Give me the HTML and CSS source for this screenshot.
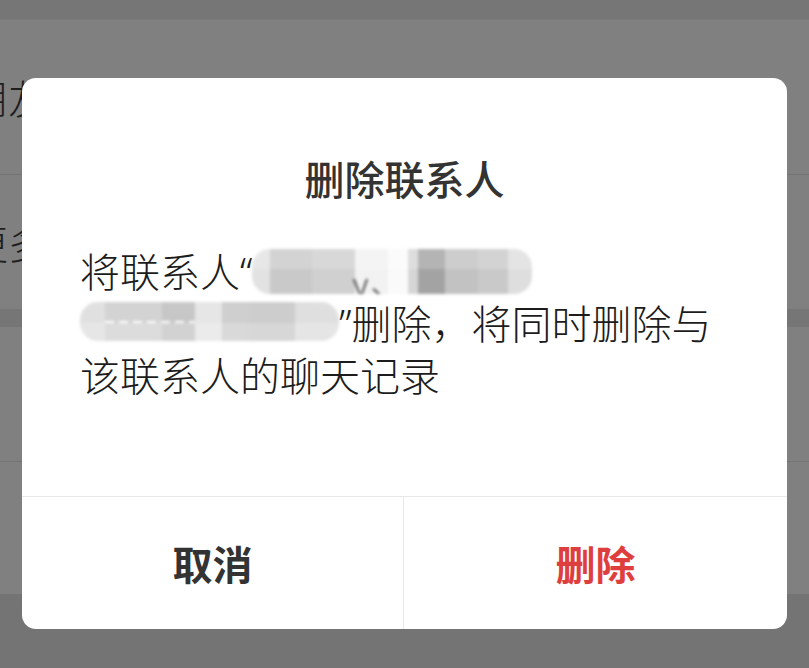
FILE: index.html
```html
<!DOCTYPE html>
<html lang="zh-CN">
<head>
<meta charset="utf-8">
<title>删除联系人</title>
<link rel="stylesheet" href="styles.css">
</head>
<body>
<div class="screen">
  <div class="topbar"></div>
  <div class="row r1"><span class="bgtext">朋友</span></div>
  <div class="row r2"><span class="bgtext">更多</span></div>
  <div class="gap"></div>
  <div class="row r3"></div>
  <div class="row r4"></div>
  <div class="bottom"></div>

  <div class="dialog">
    <div class="content">
      <h2 class="title">删除联系人</h2>
      <p class="msg">将联系人<span class="q">“</span><span class="mosaic m1"><span class="frag">y、</span></span><br><span class="mosaic m2"></span><span class="q">”</span>删除，将同时删除与该联系人的聊天记录</p>
    </div>
    <div class="actions">
      <button class="btn cancel">取消</button>
      <button class="btn danger">删除</button>
    </div>
  </div>
</div>
</body>
</html>
```

FILE: styles.css
```css
html, body {
  margin: 0;
  padding: 0;
}
body {
  width: 809px;
  height: 668px;
  overflow: hidden;
  font-family: "Noto Sans CJK SC", "Noto Sans", sans-serif;
  background: #7f7f7f;
}
.screen {
  position: relative;
  width: 809px;
  height: 668px;
  display: flex;
  flex-direction: column;
  background: #808080;
}
.topbar {
  height: 20px;
  background: #767676;
  border-bottom: 1px solid #7b7b7b;
  box-sizing: border-box;
}
.row {
  display: flex;
  align-items: center;
  box-sizing: border-box;
  background: #808080;
}
.r1 { height: 155px; border-bottom: 1px solid #747474; }
.r2 { height: 134px; }
.gap { height: 18px; background: #767676; }
.r3 { height: 135px; border-bottom: 1px solid #747474; }
.r4 { height: 132px; }
.bottom { flex: 1; background: #747474; }

.bgtext {
  margin-left: -32px;
  font-size: 40px;
  font-weight: 300;
  color: #1e1e1e;
  line-height: 1;
}

.dialog {
  position: absolute;
  left: 22px;
  top: 78px;
  width: 765px;
  height: 551px;
  background: #fff;
  border-radius: 14px;
  display: flex;
  flex-direction: column;
  overflow: hidden;
}
.content {
  flex: 1;
  padding: 72px 58px 0 58px;
}
.title {
  margin: 0;
  font-size: 40px;
  line-height: 56px;
  font-weight: 500;
  color: #333;
  text-align: center;
}
.msg {
  margin: 39px 0 0;
  font-size: 40px;
  line-height: 50px;
  font-weight: 300;
  color: #1c1c1c;
}
.q {
  font-family: "Noto Sans", sans-serif;
  font-weight: 300;
}
.mosaic {
  display: inline-block;
  border-radius: 18px;
  filter: blur(1.5px);
  position: relative;
  overflow: hidden;
}
.m1 {
  width: 280px;
  height: 45px;
  vertical-align: -7px;
  background:
    linear-gradient(180deg, rgba(255,255,255,0.18) 0 45%, rgba(255,255,255,0) 45%),
    linear-gradient(90deg,
      #e2e2e2 0 18px,
      #c9c9c9 18px 60px,
      #d0d0d0 60px 103px,
      #f2f2f2 103px 136px,
      #fafafa 136px 156px,
      #d6d6d6 156px 166px,
      #a3a3a3 166px 193px,
      #c2c2c2 193px 226px,
      #c9c9c9 226px 256px,
      #dedede 256px 280px);
}
.frag {
  position: absolute;
  left: 98px;
  top: 10px;
  font-size: 40px;
  line-height: 40px;
  font-weight: 300;
  color: #555;
  clip-path: inset(50% 0 0 0);
}
.m2 {
  width: 259px;
  height: 39px;
  vertical-align: -2px;
  background:
    linear-gradient(180deg, rgba(255,255,255,0) 0 55%, rgba(255,255,255,0.2) 55%),
    linear-gradient(90deg,
      #e0e0e0 0 25px,
      #d3d3d3 25px 82px,
      #c7c7c7 82px 115px,
      #e6e6e6 115px 142px,
      #cfcfcf 142px 169px,
      #cdcdcd 169px 215px,
      #dfdfdf 215px 259px);
}
.m2::after {
  content: "";
  position: absolute;
  left: 25px;
  top: 19px;
  width: 90px;
  height: 2px;
  background: repeating-linear-gradient(90deg, #fff 0 9px, transparent 9px 14px);
}

.actions {
  height: 133px;
  flex: none;
  border-top: 1px solid #e8e8e8;
  box-sizing: border-box;
  display: grid;
  grid-template-columns: 382px 1fr;
}
.btn {
  border: 0;
  background: transparent;
  margin: 0;
  padding: 0;
  font-family: "Noto Sans CJK SC", sans-serif;
  font-size: 40px;
  font-weight: 700;
  color: #333;
}
.cancel {
  border-right: 1px solid #e8e8e8;
}
.danger {
  color: #df3e3e;
}
```
